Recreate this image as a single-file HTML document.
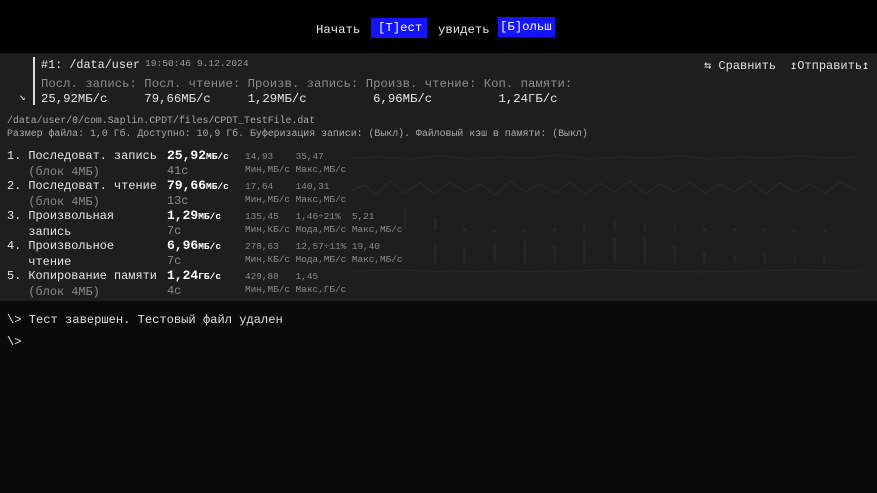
<!DOCTYPE html>
<html><head><meta charset="utf-8"><style>
*{margin:0;padding:0}
body{width:877px;height:493px;background:#0a0a0a;position:relative;overflow:hidden;font-family:"Liberation Mono","DejaVu Sans Mono",monospace;color:#d8d8d8}
.a{position:absolute;white-space:pre;line-height:1}
#top{position:absolute;left:0;top:0;width:877px;height:53px;background:#000}
#panel{position:absolute;left:0;top:53px;width:877px;height:248px;background:#1e1e1e}
.b{background:#1414ff;color:#fff}
.s{font-size:9.4px;color:#8a8a8a}
.r{font-size:11.9px;color:#e6e6e6;line-height:15.5px}
.g{color:#8a8a8a}
.v{font-size:13px;color:#fff;font-weight:bold}
.v small{font-size:9.5px;font-weight:bold}
</style></head><body>
<div id="top"></div>
<div class="a" style="left:316px;top:24px;font-size:12.3px;color:#e8e8e8">Начать</div>
<div class="a b" style="left:371px;top:18px;width:56px;height:20px"></div>
<div class="a" style="left:378px;top:22px;font-size:12.3px;color:#fff">[Т]ест</div>
<div class="a" style="left:438px;top:24px;font-size:12.3px;color:#e8e8e8">увидеть</div>
<div class="a b" style="left:498px;top:17px;width:57px;height:20px"></div>
<div class="a" style="left:500px;top:21px;font-size:12.3px;color:#fff">[Б]ольш</div>

<div id="panel"></div>
<svg class="a" style="left:0;top:53px" width="877" height="248">
<polyline fill="none" stroke="#262626" stroke-width="1" points="350,105 380,104 410,106 440,103 470,106 500,104 530,105 560,102 590,106 620,104 650,105 680,103 710,106 740,104 770,105 800,103 830,105 860,104"/>
<polyline fill="none" stroke="#292929" stroke-width="1" points="350,138 365,132 375,142 390,128 405,140 420,130 435,141 450,129 465,139 480,131 495,142 510,128 525,139 540,131 555,140 570,129 585,141 600,130 615,139 630,128 645,141 660,131 675,139 690,129 705,140 720,131 735,139 750,128 765,141 780,130 795,139 810,131 825,140 840,129 855,137"/>
<polyline fill="none" stroke="#262626" stroke-width="1" points="350,218 400,217 450,219 500,218 550,219 600,217 650,218 700,219 750,218 800,217 860,218"/>
<g fill="#262626">
<rect x="404" y="155" width="3" height="22"/>
<rect x="434" y="165" width="3" height="12"/><rect x="463" y="175" width="3" height="3"/><rect x="493" y="177" width="3" height="2"/><rect x="523" y="177" width="3" height="2"/><rect x="553" y="175" width="3" height="3"/><rect x="583" y="170" width="3" height="8"/><rect x="613" y="168" width="3" height="10"/><rect x="643" y="170" width="3" height="8"/><rect x="673" y="170" width="3" height="8"/><rect x="703" y="175" width="3" height="3"/><rect x="733" y="175" width="3" height="3"/><rect x="763" y="176" width="3" height="2"/><rect x="793" y="177" width="3" height="2"/><rect x="823" y="177" width="3" height="2"/>
<rect x="434" y="190" width="3" height="20"/><rect x="463" y="195" width="3" height="15"/><rect x="493" y="190" width="3" height="20"/><rect x="523" y="188" width="3" height="22"/><rect x="553" y="193" width="3" height="17"/><rect x="583" y="188" width="3" height="22"/><rect x="613" y="185" width="3" height="25"/><rect x="643" y="183" width="3" height="27"/><rect x="673" y="193" width="3" height="17"/><rect x="703" y="200" width="3" height="10"/><rect x="733" y="203" width="3" height="7"/><rect x="763" y="200" width="3" height="10"/><rect x="793" y="202" width="3" height="8"/><rect x="823" y="203" width="3" height="7"/>
</g>
</svg>

<div class="a" style="left:33px;top:57px;width:2px;height:48px;background:#ddd"></div>
<div class="a" style="left:41px;top:60px;font-size:11.8px;color:#e6e6e6">#1: /data/user</div>
<div class="a" style="left:145px;top:59px;font-size:9.6px;color:#999">19:50:46 9.12.2024</div>
<div class="a" style="left:41px;top:78px;font-size:12.3px;color:#8c8c8c">Посл. запись: Посл. чтение: Произв. запись: Произв. чтение: Коп. памяти:</div>
<div class="a" style="left:41px;top:93px;font-size:12.3px;color:#e6e6e6">25,92МБ/с     79,66МБ/с     1,29МБ/с         6,96МБ/с         1,24ГБ/с</div>
<div class="a" style="left:19px;top:93px;font-size:11px;color:#ddd">↘</div>
<div class="a" style="left:704px;top:60px;font-size:12px;color:#e0e0e0">⇆ Сравнить</div>
<div class="a" style="left:790px;top:60px;font-size:12px;color:#e0e0e0">↥Отправить↥</div>
<div class="a" style="left:7px;top:116px;font-size:9.9px;color:#aaa">/data/user/0/com.Saplin.CPDT/files/CPDT_TestFile.dat</div>
<div class="a" style="left:7px;top:129px;font-size:9.9px;color:#aaa">Размер файла: 1,0 Гб. Доступно: 10,9 Гб. Буферизация записи: (Выкл). Файловый кэш в памяти: (Выкл)</div>

<div class="a r" style="left:7px;top:149px">1. Последоват. запись
   <span class="g">(блок 4МБ)</span></div>
<div class="a r" style="left:7px;top:179px">2. Последоват. чтение
   <span class="g">(блок 4МБ)</span></div>
<div class="a r" style="left:7px;top:209px">3. Произвольная
   запись</div>
<div class="a r" style="left:7px;top:239px">4. Произвольное
   чтение</div>
<div class="a r" style="left:7px;top:269px">5. Копирование памяти
   <span class="g">(блок 4МБ)</span></div>

<div class="a v" style="left:167px;top:149px">25,92<small>МБ/с</small></div>
<div class="a r g" style="left:167px;top:164px">41с</div>
<div class="a v" style="left:167px;top:179px">79,66<small>МБ/с</small></div>
<div class="a r g" style="left:167px;top:194px">13с</div>
<div class="a v" style="left:167px;top:209px">1,29<small>МБ/с</small></div>
<div class="a r g" style="left:167px;top:224px">7с</div>
<div class="a v" style="left:167px;top:239px">6,96<small>МБ/с</small></div>
<div class="a r g" style="left:167px;top:254px">7с</div>
<div class="a v" style="left:167px;top:269px">1,24<small>ГБ/с</small></div>
<div class="a r g" style="left:167px;top:284px">4с</div>

<div class="a s" style="left:245px;top:150px;line-height:13px">14,93    35,47
Мин,МБ/с Макс,МБ/с</div>
<div class="a s" style="left:245px;top:180px;line-height:13px">17,64    140,31
Мин,МБ/с Макс,МБ/с</div>
<div class="a s" style="left:245px;top:210px;line-height:13px">135,45   1,46÷21%  5,21
Мин,КБ/с Мода,МБ/с Макс,МБ/с</div>
<div class="a s" style="left:245px;top:240px;line-height:13px">278,63   12,57÷11% 19,40
Мин,КБ/с Мода,МБ/с Макс,МБ/с</div>
<div class="a s" style="left:245px;top:270px;line-height:13px">429,88   1,45
Мин,МБ/с Макс,ГБ/с</div>

<div class="a" style="left:7px;top:314px;font-size:12.1px;color:#e0e0e0">\&gt; Тест завершен. Тестовый файл удален</div>
<div class="a" style="left:7px;top:336px;font-size:12.1px;color:#e0e0e0">\&gt;</div>
</body></html>
